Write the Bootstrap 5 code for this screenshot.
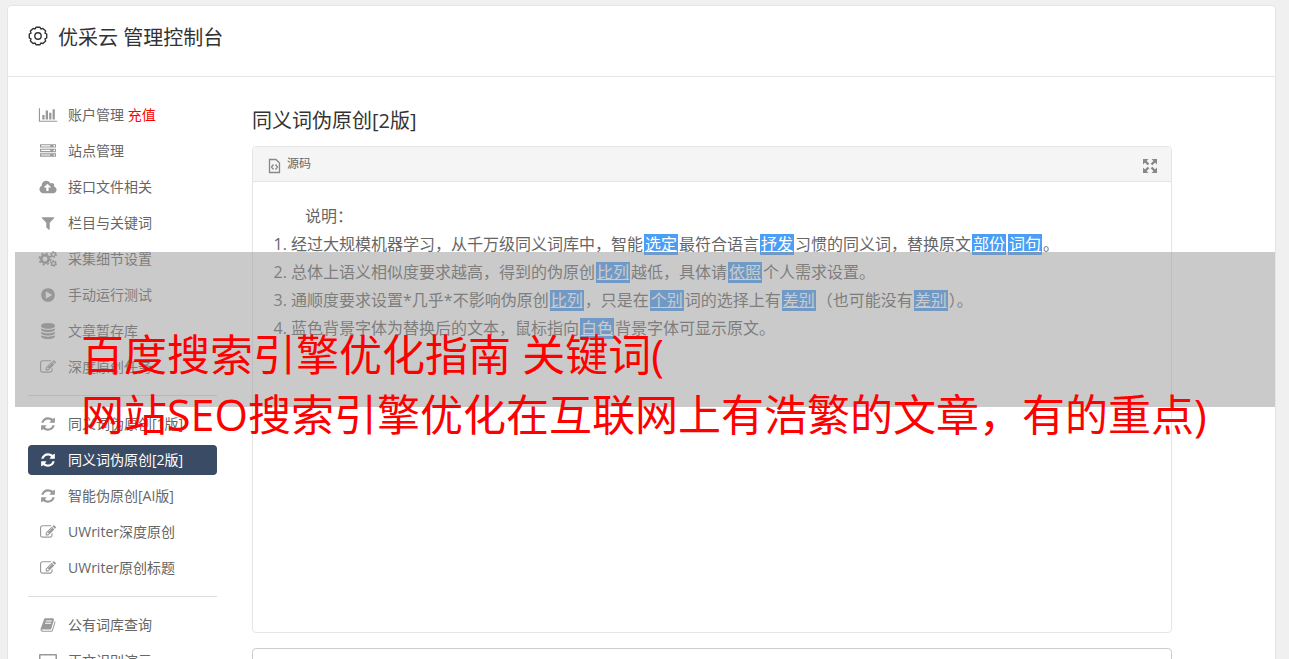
<!DOCTYPE html>
<html lang="zh-CN">
<head>
<meta charset="utf-8">
<meta name="viewport" content="width=device-width, initial-scale=1">
<title>优采云 管理控制台</title>
<link href="https://cdn.jsdelivr.net/npm/bootstrap@5.3.0/dist/css/bootstrap.min.css" rel="stylesheet">
<style>
body { background: #f0f0f0; color: #666; font-family: "Open Sans", "Noto Sans CJK SC", sans-serif; font-size: 14px; font-weight: 400; }
.console { margin: 5px 13px 0 7px; background: #fff; border: 1px solid #e5e5e5; border-radius: 4px; }
.console-head { height: 71px; padding: 17px 20px 0; border-bottom: 1px solid #e5e5e5; color: #333; }
.console-head h1, .tool h2 { font-size: 20px; line-height: 30px; font-weight: 400; color: #333; margin: 0; }
.console-head svg { width: 20px; height: 20px; margin-top: 3px; margin-right: 10px; }
.console-body { padding: 23px 103px 0 20px; gap: 35px; }
.side { width: 189px; }
.side a { height: 30px; margin-bottom: 6px; padding: 0 10px; gap: 10px; line-height: 30px; border-radius: 4px; color: #666; white-space: nowrap; }
.side a svg { width: 20px; height: 16px; fill: #999; flex: none; }
.side a.active { background: #3a4b66; color: #fff; }
.side a.active svg { fill: #fff; }
.side hr { margin: 7px 0 13px; color: #ddd; opacity: 1; }
.side .pay { color: #f00; }
.tool { min-width: 0; padding-top: 6px; }
.tool h2 { margin-bottom: 10px; }
.editor { border: 1px solid #e5e5e5; border-radius: 4px; height: 487px; margin-bottom: 15px; }
.editor-bar { height: 35px; padding: 0 14px 0 15px; background: #f5f5f5; border-bottom: 1px solid #e5e5e5; border-radius: 3px 3px 0 0; font-size: 12px; }
.editor-bar button { color: #666; line-height: 36px; gap: 6px; }
.editor-text { padding: 20px; font-size: 16px; line-height: 28px; }
.editor-text p { margin: 0; padding-left: 32px; }
.editor-text ol { margin: 0; padding-left: 18px; }
.swap { display: inline-block; margin: 0 1px; padding: 0 1px; line-height: 21px; background: #4a9ef5; color: #fff; }
.swap:hover { color: #fff; }
.output { display: block; width: 100%; height: 160px; border: 1px solid #ccc; border-radius: 4px; resize: none; }
.caption { top: 252px; left: 15px; right: 14px; height: 155px; padding: 73px 0 0 66px; background: rgba(150,150,150,.5); color: #f00; font-size: 43px; line-height: 60px; white-space: nowrap; pointer-events: none; }
</style>
</head>
<body>
<svg class="d-none" xmlns="http://www.w3.org/2000/svg">
<symbol id="chart" viewBox="0 0 2048 1792"><path d="M640 896v512h-256v-512h256zm384-512v1024h-256v-1024h256zm1024 1152v128h-2048v-1536h128v1408h1920zm-640-896v768h-256v-768h256zm384-384v1152h-256v-1152h256z"/></symbol>
<symbol id="server" viewBox="0 0 1792 1792"><path d="M128 1408h1024v-128h-1024v128zm0-512h1024v-128h-1024v128zm1568 448q0-40-28-68t-68-28-68 28-28 68 28 68 68 28 68-28 28-68zm-1568-960h1024v-128h-1024v128zm1568 448q0-40-28-68t-68-28-68 28-28 68 28 68 68 28 68-28 28-68zm0-512q0-40-28-68t-68-28-68 28-28 68 28 68 68 28 68-28 28-68zm96 832v384h-1792v-384h1792zm0-512v384h-1792v-384h1792zm0-512v384h-1792v-384h1792z"/></symbol>
<symbol id="cloud" viewBox="0 0 1920 1792"><path d="M1280 928q0-14-9-23l-352-352q-9-9-23-9t-23 9l-351 351q-10 12-10 24 0 14 9 23t23 9h224v352q0 13 9.500 22.500t22.500 9.500h192q13 0 22.500-9.500t9.500-22.500v-352h224q13 0 22.500-9.500t9.500-22.500zm640 288q0 159-112.500 271.500t-271.500 112.500h-1088q-185 0-316.500-131.500t-131.500-316.500q0-130 70-240t188-165q-2-30-2-43 0-212 150-362t362-150q156 0 285.500 87t188.500 231q71-62 166-62 106 0 181 75t75 181q0 76-41 138 130 31 213.500 135.500t83.500 238.500z"/></symbol>
<symbol id="filter" viewBox="0 0 1792 1792"><path d="M1595 295q17 41-14 70l-493 493v742q0 42-39 59-13 5-25 5-27 0-45-19l-256-256q-19-19-19-45v-486l-493-493q-31-29-14-70 17-39 59-39h1280q42 0 59 39z"/></symbol>
<symbol id="gears" viewBox="0 0 20 16"><g fill="none" stroke="#999"><circle cx="7" cy="8" r="3.700" stroke-width="2.600"/><circle cx="7" cy="8" r="5.600" stroke-width="1.800" stroke-dasharray="2.200 2.198"/><circle cx="15.500" cy="3.500" r="1.900" stroke-width="1.400"/><circle cx="15.500" cy="3.500" r="2.900" stroke-width="1.200" stroke-dasharray="1.500 1.537"/><circle cx="15.500" cy="12.500" r="1.900" stroke-width="1.400"/><circle cx="15.500" cy="12.500" r="2.900" stroke-width="1.200" stroke-dasharray="1.500 1.537"/></g></symbol>
<symbol id="play" viewBox="0 0 1792 1792"><path d="M896 128q209 0 385.500 103t279.500 279.500 103 385.500-103 385.500-279.500 279.500-385.500 103-385.500-103-279.500-279.500-103-385.500 103-385.500 279.500-279.500 385.500-103zm384 823q32-18 32-55t-32-55l-544-320q-31-19-64-1-32 19-32 56v640q0 37 32 56 16 8 32 8 17 0 32-9z"/></symbol>
<symbol id="database" viewBox="0 0 1792 1792"><path d="M896 768q237 0 443-43t325-127v170q0 69-103 128t-280 93.500-385 34.500-385-34.500-280-93.500-103-128v-170q119 84 325 127t443 43zm0 768q237 0 443-43t325-127v170q0 69-103 128t-280 93.500-385 34.500-385-34.500-280-93.500-103-128v-170q119 84 325 127t443 43zm0-384q237 0 443-43t325-127v170q0 69-103 128t-280 93.500-385 34.500-385-34.500-280-93.500-103-128v-170q119 84 325 127t443 43zm0-1152q208 0 385 34.500t280 93.500 103 128v128q0 69-103 128t-280 93.500-385 34.500-385-34.500-280-93.500-103-128v-128q0-69 103-128t280-93.500 385-34.500z"/></symbol>
<symbol id="edit" viewBox="0 0 1792 1792"><path d="M888 1184l116-116-152-152-116 116v56h96v96h56zm440-720q-16-16-33 1l-350 350q-17 17-1 33t33-1l350-350q17-17 1-33zm80 594v190q0 119-84.500 203.500t-203.500 84.500h-832q-119 0-203.500-84.500t-84.500-203.500v-832q0-119 84.500-203.500t203.500-84.500h832q63 0 117 25 15 7 18 23 3 17-9 29l-49 49q-14 14-32 8-23-6-45-6h-832q-66 0-113 47t-47 113v832q0 66 47 113t113 47h832q66 0 113-47t47-113v-126q0-13 9-22l64-64q15-15 35-7t20 29zm-96-738l288 288-672 672h-288v-288zm444 132l-92 92-288-288 92-92q28-28 68-28t68 28l152 152q28 28 28 68t-28 68z"/></symbol>
<symbol id="refresh" viewBox="0 0 1792 1792"><path d="M1639 1056q0 5-1 7-64 268-268 434.500t-478 166.500q-146 0-282.500-55t-243.500-157l-129 129q-19 19-45 19t-45-19-19-45v-448q0-26 19-45t45-19h448q26 0 45 19t19 45-19 45l-137 137q71 66 161 102t187 36q134 0 250-65t186-179q11-17 53-117 8-23 30-23h192q13 0 22.500 9.500t9.500 22.500zm25-800v448q0 26-19 45t-45 19h-448q-26 0-45-19t-19-45 19-45l138-138q-148-137-349-137-134 0-250 65t-186 179q-11 17-53 117-8 23-30 23h-199q-13 0-22.500-9.500t-9.500-22.500v-7q65-268 270-434.500t480-166.500q146 0 284 55.500t245 156.500l130-129q19-19 45-19t45 19 19 45z"/></symbol>
<symbol id="book" viewBox="0 0 1792 1792"><path d="M1703 478q40 57 18 129l-275 906q-19 64-76.500 107.500t-122.500 43.500h-923q-77 0-148.500-53.500t-99.500-131.500q-24-67-2-127 0-4 3-27t4-37q1-8-3-21.500t-3-19.500q2-11 8-21t16.500-23.500 16.500-23.500q23-38 45-91.500t30-91.500q3-10 .5-30t-.5-28q3-11 17-28t17-23q21-36 42-92t25-90q1-9-2.500-32t.5-28q4-13 22-30.500t22-22.500q19-26 42.500-84.500t27.500-96.500q1-8-3-25.500t-2-26.500q2-8 9-18t18-23 17-21q8-12 16.500-30.500t15-35 16-36 19.500-32 26.500-23.500 36-11.500 47.500 5.500l-1 3q38-9 51-9h761q74 0 114 56t18 130l-274 906q-36 119-71.500 153.500t-128.500 34.500h-869q-27 0-38 15-11 16-1 43 24 70 144 70h923q29 0 56-15.500t35-41.500l300-987q7-22 5-57 38 15 59 43zm-1064 2q-4 13 2 22.500t20 9.500h608q13 0 25.500-9.500t16.500-22.500l21-64q4-13-2-22.500t-20-9.500h-608q-13 0-25.500 9.500t-16.500 22.500zm-83 256q-4 13 2 22.500t20 9.500h608q13 0 25.500-9.500t16.500-22.500l21-64q4-13-2-22.500t-20-9.500h-608q-13 0-25.500 9.500t-16.500 22.500z"/></symbol>
<symbol id="screen" viewBox="0 0 20 16"><path fill-rule="evenodd" d="M2 1h16q1 0 1 1v10q0 1-1 1h-6l1 2H7l1-2H2q-1 0-1-1V2q0-1 1-1zm.5 1.500v9h15v-9z"/></symbol>
</svg>

<div class="vh-100 overflow-hidden position-relative">
  <div class="console d-flex flex-column">
    <header class="console-head d-flex align-items-start">
      <svg viewBox="0 0 20 20" fill="none" stroke="#333" stroke-width="1.400" aria-hidden="true"><path stroke-linejoin="round" d="M7.100 3 8 1.300h4l.9 1.700 2-.6 2.700 2.700-.6 2L18.700 8v4l-1.700.9.6 2-2.700 2.700-2-.6-.9 1.700H8L7.100 17l-2 .6-2.700-2.700.6-2L1.300 12V8L3 7.100l-.6-2 2.700-2.700z"/><circle cx="10" cy="10" r="3.200"/></svg>
      <h1>优采云 管理控制台</h1>
    </header>
    <div class="console-body d-flex">
      <nav class="side nav flex-column flex-nowrap flex-shrink-0">
        <a class="d-flex align-items-center text-decoration-none" href="#"><svg><use href="#chart"/></svg><span>账户管理 <span class="pay">充值</span></span></a>
        <a class="d-flex align-items-center text-decoration-none" href="#"><svg><use href="#server"/></svg>站点管理</a>
        <a class="d-flex align-items-center text-decoration-none" href="#"><svg><use href="#cloud"/></svg>接口文件相关</a>
        <a class="d-flex align-items-center text-decoration-none" href="#"><svg><use href="#filter"/></svg>栏目与关键词</a>
        <a class="d-flex align-items-center text-decoration-none" href="#"><svg><use href="#gears"/></svg>采集细节设置</a>
        <a class="d-flex align-items-center text-decoration-none" href="#"><svg><use href="#play"/></svg>手动运行测试</a>
        <a class="d-flex align-items-center text-decoration-none" href="#"><svg><use href="#database"/></svg>文章暂存库</a>
        <a class="d-flex align-items-center text-decoration-none" href="#"><svg><use href="#edit"/></svg>深度原创任务</a>
        <hr>
        <a class="d-flex align-items-center text-decoration-none" href="#"><svg><use href="#refresh"/></svg>同义词伪原创[1版]</a>
        <a class="active d-flex align-items-center text-decoration-none" href="#" aria-current="page"><svg><use href="#refresh"/></svg>同义词伪原创[2版]</a>
        <a class="d-flex align-items-center text-decoration-none" href="#"><svg><use href="#refresh"/></svg>智能伪原创[AI版]</a>
        <a class="d-flex align-items-center text-decoration-none" href="#"><svg><use href="#edit"/></svg>UWriter深度原创</a>
        <a class="d-flex align-items-center text-decoration-none" href="#"><svg><use href="#edit"/></svg>UWriter原创标题</a>
        <hr>
        <a class="d-flex align-items-center text-decoration-none" href="#"><svg><use href="#book"/></svg>公有词库查询</a>
        <a class="d-flex align-items-center text-decoration-none" href="#"><svg><use href="#screen"/></svg>正文识别演示</a>
      </nav>
      <main class="tool flex-fill">
        <h2>同义词伪原创[2版]</h2>
        <section class="editor">
          <div class="editor-bar d-flex justify-content-between align-items-center">
            <button type="button" class="d-flex align-items-center border-0 bg-transparent p-0"><svg class="mt-1" width="13" height="16" viewBox="0 0 13 16" fill="none" stroke="#888" stroke-width="1.300"><path d="M1.500 1.500h6.500l3.500 3.500v9.500h-10zM5.500 6.500 3.500 9l2 2.500M7.500 6.500l2 2.500-2 2.500"/></svg>源码</button>
            <button type="button" class="d-flex border-0 bg-transparent p-0 mt-1" aria-label="全屏"><svg width="14" height="14" viewBox="0 0 14 14" fill="#888" stroke="#888" stroke-width="2.400"><path stroke="none" d="M0 0h5.500L0 5.500zM14 0v5.500L8.500 0zM0 14V8.500L5.500 14zM14 14H8.500L14 8.500z"/><path d="M2 2l3.500 3.500M12 2 8.500 5.500M2 12l3.500-3.500M12 12 8.500 8.500"/></svg></button>
          </div>
          <div class="editor-text">
            <p>说明：</p>
            <ol>
              <li>经过大规模机器学习，从千万级同义词库中，智能<a class="swap" href="#">选定</a>最符合语言<a class="swap" href="#">抒发</a>习惯的同义词，替换原文<a class="swap" href="#">部份</a><a class="swap" href="#">词句</a>。</li>
              <li>总体上语义相似度要求越高，得到的伪原创<a class="swap" href="#">比列</a>越低，具体请<a class="swap" href="#">依照</a>个人需求设置。</li>
              <li>通顺度要求设置*几乎*不影响伪原创<a class="swap" href="#">比列</a>，只是在<a class="swap" href="#">个别</a>词的选择上有<a class="swap" href="#">差别</a>（也可能没有<a class="swap" href="#">差别</a>）。</li>
              <li>蓝色背景字体为替换后的文本，鼠标指向<a class="swap" href="#">白色</a>背景字体可显示原文。</li>
            </ol>
          </div>
        </section>
        <textarea class="output" aria-label="输出"></textarea>
      </main>
    </div>
  </div>
  <div class="caption position-absolute">百度搜索引擎优化指南 关键词(<br>网站SEO搜索引擎优化在互联网上有浩繁的文章，有的重点)</div>
</div>
<script src="https://cdn.jsdelivr.net/npm/bootstrap@5.3.0/dist/js/bootstrap.bundle.min.js"></script>
</body>
</html>
